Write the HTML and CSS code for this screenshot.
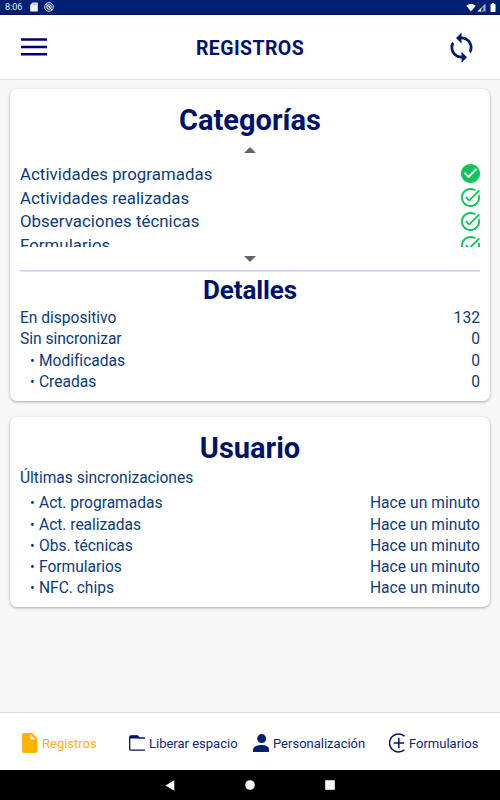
FILE: index.html
```
<!DOCTYPE html>
<html lang="es">
<head>
<meta charset="utf-8">
<title>Registros</title>
<link rel="stylesheet" href="styles.css">
</head>
<body>
<div class="statusbar">
  <span class="time">8:06</span>
  <svg class="sd" width="8" height="10" viewBox="0 0 8 10"><path fill="#f4f6fa" d="M2.600 .5H7a.8.8 0 0 1 .8.8v7.400a.8.8 0 0 1-.8.8H1a.8.8 0 0 1-.8-.8V3z"/><path stroke="#7d8db5" stroke-width=".7" d="M3.200 1.500v1.800M4.700 1.500v1.800M6.200 1.500v1.800"/></svg>
  <svg class="circ" width="10" height="10" viewBox="0 0 10 10" fill="none" stroke="#dfe4ef"><circle cx="5" cy="5" r="4.300" stroke-width="1"/><circle cx="5" cy="5" r="2.200" stroke-width="1.100"/><path d="M1.800 2l6.400 6.200M5 5l1.500-1.500" stroke-width="1"/></svg>
  <span class="spacer"></span>
  <svg class="wifi" width="10" height="9" viewBox="0 0 10 9"><path fill="#fff" d="M5 8.500L.3 2.700C3 .3 7 .3 9.700 2.700z"/></svg>
  <svg class="cell" width="9" height="9" viewBox="0 0 9 9"><path fill="#a3aecb" d="M8.500.5v8H.5z"/><path fill="#002171" d="M6.300 4v3.500H3.200z"/><path fill="#fff" d="M4 5v3.500H.5z"/></svg>
  <svg class="batt" width="6" height="9" viewBox="0 0 6 9"><path fill="#fff" d="M2 0h2v1h.8a.7.7 0 0 1 .7.7V8.200a.7.7 0 0 1-.7.7H1.200a.7.7 0 0 1-.7-.7V1.700a.7.700 0 0 1 .7-.7H2z"/></svg>
</div>
<header class="header">
  <svg class="menu" width="26" height="18" viewBox="0 0 26 18"><path d="M0 1.500h26M0 9h26M0 16.300h26" stroke="#00006b" stroke-width="2.400"/></svg>
  <h1>REGISTROS</h1>
  <svg class="sync" width="33" height="33" viewBox="0 0 24 24" fill="#001a70"><path d="M12 4V1L8 5l4 4V6c3.310 0 6 2.690 6 6 0 1.010-.25 1.970-.7 2.800l1.460 1.460C19.540 15.030 20 13.570 20 12c0-4.420-3.580-8-8-8zm0 14c-3.310 0-6-2.690-6-6 0-1.010.25-1.970.7-2.800L5.240 7.740C4.460 8.970 4 10.430 4 12c0 4.420 3.580 8 8 8v3l4-4-4-4v3z"/></svg>
</header>
<main class="content">
  <section class="card records">
    <h2>Categorías</h2>
    <svg class="arrow" width="12" height="6" viewBox="0 0 12 6"><path d="M0 6L6 0l6 6z" fill="#666"/></svg>
    <ul class="categories">
      <li><span>Actividades programadas</span><svg viewBox="2 2 20 20"><path fill="#10c45c" d="M12 2C6.480 2 2 6.480 2 12s4.480 10 10 10 10-4.480 10-10S17.520 2 12 2zm-2 15l-5-5 1.410-1.410L10 14.170l7.590-7.590L19 8l-9 9z"/></svg></li>
      <li><span>Actividades realizadas</span><svg viewBox="2 2 20 20"><use href="#check"/></svg></li>
      <li><span>Observaciones técnicas</span><svg viewBox="2 2 20 20"><use href="#check"/></svg></li>
      <li><span>Formularios</span><svg viewBox="2 2 20 20"><path id="check" fill="#10c45c" d="M22 5.180L10.590 16.600l-4.240-4.240 1.410-1.410 2.830 2.830 10-10L22 5.180zM19.790 10.220c.13.570.21 1.170.21 1.780 0 4.420-3.580 8-8 8s-8-3.580-8-8 3.580-8 8-8c1.580 0 3.040.46 4.280 1.250l1.440-1.440C16.100 2.670 14.130 2 12 2 6.480 2 2 6.480 2 12s4.480 10 10 10 10-4.480 10-10c0-1.190-.22-2.330-.6-3.390l-1.610 1.610z"/></svg></li>
    </ul>
    <svg class="arrow" width="12" height="6" viewBox="0 0 12 6"><path d="M0 0h12L6 6z" fill="#666"/></svg>
    <hr>
    <h3>Detalles</h3>
    <dl class="rows">
      <div><dt>En dispositivo</dt><dd>132</dd></div>
      <div><dt>Sin sincronizar</dt><dd>0</dd></div>
      <div class="sub"><dt>Modificadas</dt><dd>0</dd></div>
      <div class="sub"><dt>Creadas</dt><dd>0</dd></div>
    </dl>
  </section>
  <section class="card user">
    <h2>Usuario</h2>
    <p>Últimas sincronizaciones</p>
    <dl class="rows">
      <div class="sub"><dt>Act. programadas</dt><dd>Hace un minuto</dd></div>
      <div class="sub"><dt>Act. realizadas</dt><dd>Hace un minuto</dd></div>
      <div class="sub"><dt>Obs. técnicas</dt><dd>Hace un minuto</dd></div>
      <div class="sub"><dt>Formularios</dt><dd>Hace un minuto</dd></div>
      <div class="sub"><dt>NFC. chips</dt><dd>Hace un minuto</dd></div>
    </dl>
  </section>
</main>
<nav class="tabs">
  <a class="tab active"><svg width="16" height="20" viewBox="0 0 16 20"><path fill="#ffb300" d="M2 0h8.200L15.300 5.500V18a2 2 0 0 1-2 2H2a2 2 0 0 1-2-2V2a2 2 0 0 1 2-2z"/><path fill="#fff" d="M8.500 1.700v4.800h5z"/></svg><span>Registros</span></a>
  <a class="tab free"><svg width="16" height="16" viewBox="0 0 16 16"><path d="M16 15.200H2A1.300 1.300 0 0 1 .7 13.900V2A1.300 1.300 0 0 1 2 .8H8.500L10.300 3H16" fill="none" stroke="#00126c" stroke-width="1.300"/><path fill="#00126c" d="M1 .8h7.500L10.500 3.500H1z"/></svg><span>Liberar espacio</span></a>
  <a class="tab person"><svg width="16" height="18" viewBox="0 0 16 18" fill="#002171"><circle cx="8.700" cy="4.600" r="4.500"/><path d="M0 18v-2.500C0 12.500 4.500 11 8.300 11S16 12.500 16 15v3z"/></svg><span>Personalización</span></a>
  <a class="tab forms"><svg width="16" height="20" viewBox="0 0 16 20" fill="none" stroke="#00126c" stroke-width="1.500"><path d="M15.500 3.300A9 9 0 1 0 15.500 16.700M9.800 4.700v10.600M4.700 10h10.400"/></svg><span>Formularios</span></a>
</nav>
<div class="sysnav">
  <svg width="10" height="11" viewBox="0 0 10 11"><path fill="#fff" d="M9.300.2v10.600L.5 5.500z"/></svg>
  <svg width="10" height="10" viewBox="0 0 10 10"><circle cx="5" cy="5" r="4.800" fill="#fff"/></svg>
  <svg width="10" height="10" viewBox="0 0 10 10"><path fill="#fff" d="M.2.200h9.600v9.600H.2z"/></svg>
</div>
</body>
</html>
```
FILE: styles.css
```
* { box-sizing: border-box; margin: 0; padding: 0; }
body {
  width: 500px; height: 800px; overflow: hidden;
  display: flex; flex-direction: column;
  background: #f7f7f7; color: #0a3b80;
  font-family: Roboto, "Liberation Sans", sans-serif;
}
svg { display: block; flex: none; }
h1, h2, h3 { color: #00126c; font-weight: 700; text-align: center; white-space: nowrap; }
.statusbar {
  height: 15px; flex: none; display: flex; align-items: center;
  background: #002171; border-bottom: 1px solid #000a5c; padding: 0 4px 0 5px;
}
.time { font-size: 9px; line-height: 14px; color: #e8ecf4; width: 25px; }
.circ { margin-left: 6px; }
.spacer { flex: 1; }
.cell { margin-left: 1px; }
.batt { margin-left: 4px; }
.header {
  height: 65px; flex: none; background: #fff; border-bottom: 1px solid #e2e2e2;
  display: grid; grid-template-columns: 56px 1fr 56px; align-items: center;
}
.menu { margin-left: 21px; }
.header h1 { font-size: 19.500px; line-height: 24px; padding-top: 3px; letter-spacing: .4px; }
.sync { margin-left: 1px; }
.content { flex: 1; padding: 9px 10px 0; }
.card {
  background: #fff; border-radius: 7px; padding: 0 10px;
  box-shadow: 0 1px 3px rgba(0,0,0,.32);
}
.records { height: 312px; margin-bottom: 16px; }
.user { height: 190px; }
.card h2 { font-size: 29px; line-height: 34px; padding-top: 14px; }
.arrow { margin: 0 auto; }
.records h2 + .arrow { margin-top: 10px; }
.categories { list-style: none; height: 85px; margin: 9px 0 9px; overflow: hidden; }
.categories li {
  height: 23.800px; display: flex; justify-content: space-between; align-items: center;
  font-size: 16.800px; letter-spacing: .07px;
}
.categories svg { width: 19px; height: 19px; }
hr { border: 0; height: 2px; background: linear-gradient(#cdd2f2 50%, #dde1f6 50%); margin-top: 8px; }
.card h3 { font-size: 26px; line-height: 32px; margin-top: 2px; letter-spacing: -.1px; }
.rows { font-size: 15.600px; line-height: 21.250px; letter-spacing: -.03px; }
.records .rows { margin-top: 2px; }
.rows div { display: flex; justify-content: space-between; height: 21.250px; }
.rows dd { letter-spacing: .04px; }
.sub dt::before { content: "•"; display: inline-block; width: 9px; line-height: 1; font-size: 14px; letter-spacing: 0; }
.sub dt { padding-left: 10px; }
.user p { font-size: 15.600px; line-height: 22px; padding-top: 2px; letter-spacing: -.03px; }
.user .rows { margin-top: 4.300px; }
.tabs {
  height: 58px; flex: none; background: #fff; border-top: 1px solid #dedede;
  display: flex; align-items: center; padding: 3px 0 0 22px;
}
.tab { display: flex; align-items: center; gap: 4px; color: #0a287a; font-size: 13px; letter-spacing: 0; white-space: nowrap; }
.active { color: #ffb300; width: 107px; }
.free { width: 124px; }
.person { width: 136px; }
.sysnav { height: 30px; flex: none; background: #000; display: flex; align-items: center; justify-content: center; gap: 70px; }
```
